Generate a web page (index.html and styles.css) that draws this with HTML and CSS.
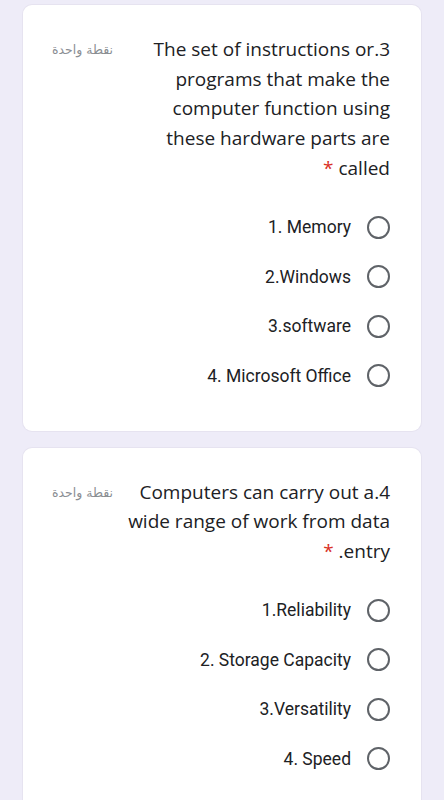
FILE: index.html
```html
<!DOCTYPE html>
<html lang="ar" dir="rtl">
<head>
<meta charset="utf-8">
<title>Form</title>
<link rel="stylesheet" href="styles.css">
</head>
<body>
<main class="page">
  <section class="card">
    <div class="head">
      <div class="title">3.The set of instructions or programs that make the computer function using these hardware parts are called <span class="req">*</span></div>
      <div class="points">نقطة واحدة</div>
    </div>
    <div class="options">
      <label class="opt"><span class="radio"></span><span class="txt" dir="auto">1. Memory</span></label>
      <label class="opt"><span class="radio"></span><span class="txt" dir="auto">2.Windows</span></label>
      <label class="opt"><span class="radio"></span><span class="txt" dir="auto">3.software</span></label>
      <label class="opt"><span class="radio"></span><span class="txt" dir="auto">4. Microsoft Office</span></label>
    </div>
  </section>
  <section class="card">
    <div class="head">
      <div class="title">4.Computers can carry out a wide range of work from data entry. <span class="req">*</span></div>
      <div class="points">نقطة واحدة</div>
    </div>
    <div class="options">
      <label class="opt"><span class="radio"></span><span class="txt" dir="auto">1.Reliability</span></label>
      <label class="opt"><span class="radio"></span><span class="txt" dir="auto">2. Storage Capacity</span></label>
      <label class="opt"><span class="radio"></span><span class="txt" dir="auto">3.Versatility</span></label>
      <label class="opt"><span class="radio"></span><span class="txt" dir="auto">4. Speed</span></label>
    </div>
  </section>
</main>
</body>
</html>
```
FILE: styles.css
```css
html, body {
  margin: 0;
  padding: 0;
}
body {
  background: #eeecf8;
  font-family: "Open Sans", "Noto Sans", sans-serif;
  color: #202124;
}
.page {
  display: flex;
  flex-direction: column;
  gap: 17px;
  padding: 5px 23px 0 23px;
}
.card {
  background: #ffffff;
  border-radius: 9px;
  padding: 30px 31px 30px 29px;
  box-shadow: 0 0 0 1px #e6e3f0;
}
.head {
  display: flex;
  align-items: flex-start;
  gap: 6px;
}
.title {
  flex: 1;
  font-size: 19px;
  line-height: 29.7px;
  text-align: right;
  color: #202124;
}
.req {
  color: #d93025;
}
.points {
  flex: 0 0 65px;
  font-family: "DejaVu Sans", sans-serif;
  font-size: 12.5px;
  line-height: 29.7px;
  color: #8a8e93;
  text-align: left;
  white-space: nowrap;
}
.options {
  margin-top: 19px;
  display: flex;
  flex-direction: column;
}
.opt {
  height: 49.5px;
  display: flex;
  align-items: center;
  gap: 16px;
}
.radio {
  flex: 0 0 auto;
  width: 19px;
  height: 19px;
  border: 2px solid #5f6368;
  border-radius: 50%;
}
.txt {
  font-family: Roboto, "Noto Sans", sans-serif;
  font-size: 17.5px;
  color: #202124;
}
```
